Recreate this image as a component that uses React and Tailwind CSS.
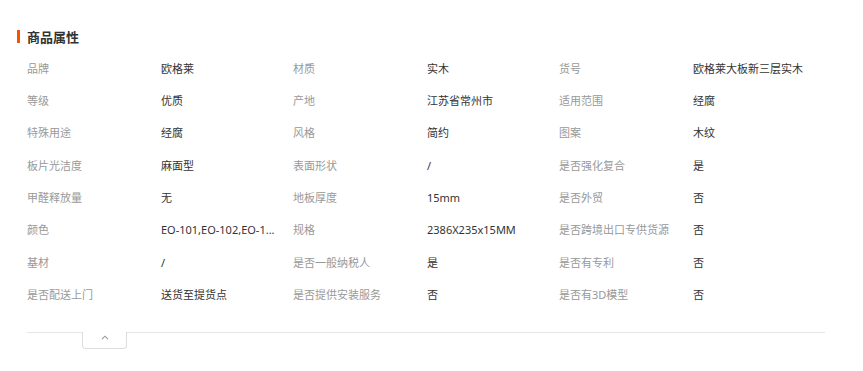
import React from 'react';

const rows = [
  ['品牌', '欧格莱', '材质', '实木', '货号', '欧格莱大板新三层实木'],
  ['等级', '优质', '产地', '江苏省常州市', '适用范围', '经腐'],
  ['特殊用途', '经腐', '风格', '简约', '图案', '木纹'],
  ['板片光洁度', '麻面型', '表面形状', '/', '是否强化复合', '是'],
  ['甲醛释放量', '无', '地板厚度', '15mm', '是否外贸', '否'],
  ['颜色', 'EO-101,EO-102,EO-1...', '规格', '2386X235x15MM', '是否跨境出口专供货源', '否'],
  ['基材', '/', '是否一般纳税人', '是', '是否有专利', '否'],
  ['是否配送上门', '送货至提货点', '是否提供安装服务', '否', '是否有3D模型', '否'],
];

const App = () => {
  return (
    <div
      className="w-[863px] h-[371px] bg-white pt-[30px]"
      style={{ fontFamily: '"Noto Sans", "Noto Sans CJK SC", sans-serif' }}
    >
      <div className="flex items-center ml-[17px] h-[13px]">
        <span className="w-[3px] h-[13px] bg-[#ff5000]" />
        <span
          className="ml-[7px] text-[13px] font-bold text-[#333] leading-none"
          style={{ fontFamily: '"Noto Sans CJK SC", sans-serif' }}
        >
          商品属性
        </span>
      </div>

      <div className="mt-[10px] ml-[27px] w-[798px]">
        {rows.map((row, i) => (
          <div key={i} className="flex items-center h-[32.3px] text-[11px]">
            {row.map((cell, j) => (
              <div
                key={j}
                className={`whitespace-nowrap ${j % 2 === 0 ? 'text-[#999]' : 'text-[#333]'} ${
                  j === 5 ? 'flex-1' : j % 2 === 0 ? 'w-[134px]' : 'w-[132px]'
                }`}
              >
                {cell}
              </div>
            ))}
          </div>
        ))}
      </div>

      <div className="mt-[21px] ml-[27px] w-[798px] border-t border-[#e5e5e5]">
        <div className="ml-[55px] -mt-px w-[45px] h-[17px] bg-white border border-t-0 border-[#ddd] rounded-b-[4px] flex justify-center pt-[3px]">
          <svg width="8" height="5" viewBox="0 0 8 5" fill="none">
            <path d="M1 4.2 L4 1.2 L7 4.2" stroke="#999" strokeWidth="1.1" />
          </svg>
        </div>
      </div>
    </div>
  );
};

export default App;
